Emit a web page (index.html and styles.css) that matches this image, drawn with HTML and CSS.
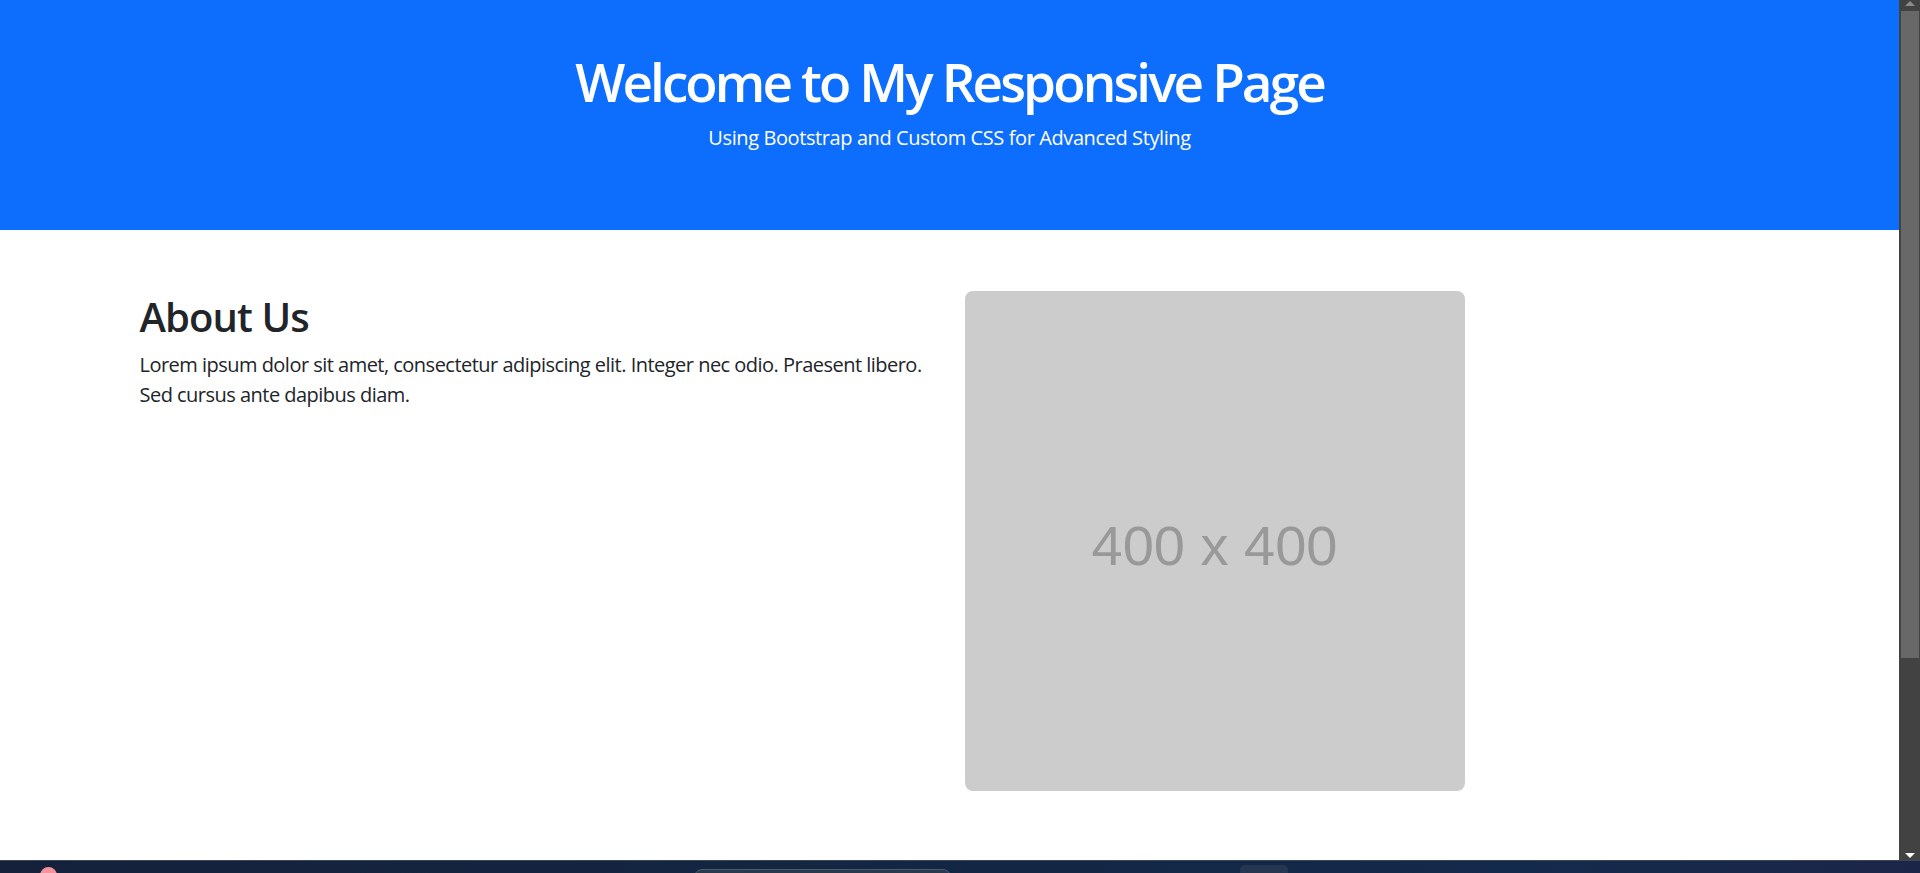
FILE: index.html
```html
<!DOCTYPE html>
<html lang="en">
<head>
<meta charset="utf-8">
<title>Responsive Page</title>
<link rel="stylesheet" href="styles.css">
</head>
<body>
<div class="screen">
  <div class="viewport">
    <div class="page">
      <header class="hero">
        <h1 class="hero-title">Welcome to My Responsive Page</h1>
        <p class="hero-sub">Using Bootstrap and Custom CSS for Advanced Styling</p>
      </header>
      <main class="container">
        <section class="col">
          <h2 class="about-title">About Us</h2>
          <p class="about-text">Lorem ipsum dolor sit amet, consectetur adipiscing elit. Integer nec odio. Praesent libero. Sed cursus ante dapibus diam.</p>
        </section>
        <section class="col">
          <div class="placeholder">400 x 400</div>
        </section>
      </main>
    </div>
    <div class="scrollbar">
      <div class="arrow arrow-up"></div>
      <div class="track">
        <div class="thumb"></div>
      </div>
      <div class="arrow arrow-down"></div>
    </div>
  </div>
  <div class="taskbar">
    <div class="tb-avatar"></div>
    <div class="tb-search"></div>
    <div class="tb-item"></div>
  </div>
</div>
</body>
</html>
```
FILE: styles.css
```css
html, body {
  margin: 0;
  padding: 0;
  width: 1920px;
  height: 873px;
  overflow: hidden;
  background: #ffffff;
}

.screen {
  display: flex;
  flex-direction: column;
  width: 1920px;
  height: 873px;
}

.viewport {
  display: flex;
  height: 860px;
}

.page {
  width: 1899px;
  height: 860px;
  overflow: hidden;
  font-family: "Open Sans", "Noto Sans", sans-serif;
  color: #212529;
  background: #ffffff;
}

.hero {
  box-sizing: border-box;
  height: 230px;
  padding-top: 48px;
  background: #0d6efd;
  color: #ffffff;
  text-align: center;
}

.hero-title {
  margin: 0 0 8px;
  font-size: 53px;
  line-height: 67px;
  font-weight: 600;
  letter-spacing: -2.9px;
}

.hero-sub {
  margin: 0;
  font-size: 20px;
  line-height: 30px;
  font-weight: 400;
  letter-spacing: -0.4px;
}

.container {
  display: flex;
  width: 1650px;
  margin: 61px auto 0;
}

.col {
  box-sizing: border-box;
  width: 825px;
  padding: 0 15px;
}

.about-title {
  margin: 2px 0 9px;
  font-size: 40px;
  line-height: 48px;
  font-weight: 600;
  letter-spacing: -0.9px;
}

.about-text {
  margin: 0;
  font-size: 20px;
  line-height: 30px;
  letter-spacing: -0.52px;
}

.placeholder {
  display: flex;
  align-items: center;
  justify-content: center;
  width: 500px;
  height: 500px;
  border-radius: 8px;
  background: #cccccc;
  color: #999999;
  font-family: "Liberation Sans", Arial, sans-serif;
  font-size: 56px;
  padding-top: 8px;
  box-sizing: border-box;
}

.scrollbar {
  display: flex;
  flex-direction: column;
  align-items: center;
  width: 21px;
  height: 860px;
  background: #424242;
}

.arrow {
  width: 0;
  height: 0;
  border-left: 5px solid transparent;
  border-right: 5px solid transparent;
}

.arrow-up {
  margin-top: 1px;
  border-bottom: 5px solid #8c8c8c;
}

.arrow-down {
  margin-bottom: 2px;
  border-top: 5px solid #ffffff;
}

.track {
  flex: 1;
  align-self: stretch;
  padding: 5px 1px 0 2px;
}

.thumb {
  height: 647px;
  background: #686868;
}

.taskbar {
  position: relative;
  height: 13px;
  box-sizing: border-box;
  border-top: 1px solid #3a475a;
  background: linear-gradient(90deg, #15213b 0%, #132643 50%, #142a4c 80%, #1c2548 100%);
  overflow: hidden;
}

.tb-avatar {
  position: absolute;
  left: 40px;
  top: 6px;
  width: 17px;
  height: 17px;
  border-radius: 50%;
  background: #f2939d;
}

.tb-search {
  position: absolute;
  left: 694px;
  top: 8px;
  width: 255px;
  height: 20px;
  border-radius: 8px;
  border: 1px solid #4b5b6e;
  background: #2a394c;
}

.tb-item {
  position: absolute;
  left: 1240px;
  top: 4px;
  width: 48px;
  height: 20px;
  border-radius: 5px;
  background: #263650;
}
```
